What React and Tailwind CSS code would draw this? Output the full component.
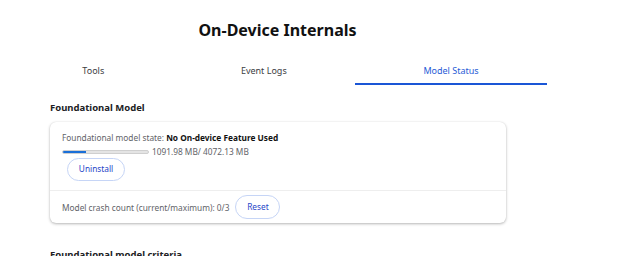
import React from "react";

export default function App() {
  const used = 1091.98;
  const total = 4072.13;
  const pct = (used / total) * 100;
  return (
    <div
      className="w-[640px] h-[256px] overflow-hidden bg-white text-[#202124]"
      style={{ fontFamily: '"Noto Sans", "Open Sans", sans-serif' }}
    >
      <div className="w-[555px]">
        <div className="pt-[19px] h-[41px] flex justify-center">
          <h1 className="text-[16px] leading-[22px] font-bold text-[#111]">On-Device Internals</h1>
        </div>
        <div className="mt-[17px] ml-[14px] w-[533px] flex">
          <div className="flex-auto h-[27px] flex items-center justify-center text-[9px] text-[#3c4043] border-b-2 border-transparent">
            Tools
          </div>
          <div className="flex-auto h-[27px] flex items-center justify-center text-[9px] text-[#3c4043] border-b-2 border-transparent">
            Event Logs
          </div>
          <div className="flex-auto h-[27px] flex items-center justify-center text-[9px] text-[#1f5bd6] border-b-2 border-[#1a56d6]">
            Model Status
          </div>
        </div>
      </div>

      <div className="px-[50px]">
        <h2 className="mt-[16px] text-[9.5px] leading-[13px] font-bold text-[#202124]">Foundational Model</h2>

        <div className="mt-[8px] w-[456px] rounded-[6px] bg-white shadow-[0_1px_3px_rgba(0,0,0,0.28),0_0_1px_rgba(0,0,0,0.12)]">
          <div className="pl-[12px] pt-[10px] pb-[9px] border-b border-[#eeeeee]">
            <div className="text-[8.3px] leading-[11px] text-[#5f6368]">
              Foundational model state: <span className="font-bold text-[#111]">No On-device Feature Used</span>
            </div>
            <div className="mt-[3px] h-[11px] flex items-center gap-[3px]">
              <div className="w-[87px] h-[4px] rounded-full bg-[#e4e4e4] border border-[#cfcfcf] overflow-hidden">
                <div className="h-full bg-[#1a6fd8]" style={{ width: `${pct}%` }} />
              </div>
              <span className="text-[8.3px] leading-[11px] text-[#5f6368]">1091.98 MB/ 4072.13 MB</span>
            </div>
            <button className="mt-[1px] ml-[5px] w-[58px] h-[23px] rounded-full border border-[#c6d5f6] bg-white text-[8.3px] text-[#1f45c8] flex items-center justify-center">
              Uninstall
            </button>
          </div>
          <div className="pl-[12px] pt-[4px] pb-[4px] flex items-center gap-[6px]">
            <span className="text-[8.3px] leading-[11px] text-[#5f6368]">Model crash count (current/maximum): 0/3</span>
            <button className="w-[45px] h-[24px] rounded-full border border-[#c6d5f6] bg-white text-[8.3px] text-[#1f45c8] flex items-center justify-center">
              Reset
            </button>
          </div>
        </div>

        <h2 className="mt-[25px] text-[9.5px] leading-[13px] font-bold text-[#202124]">Foundational model criteria</h2>
      </div>
    </div>
  );
}
